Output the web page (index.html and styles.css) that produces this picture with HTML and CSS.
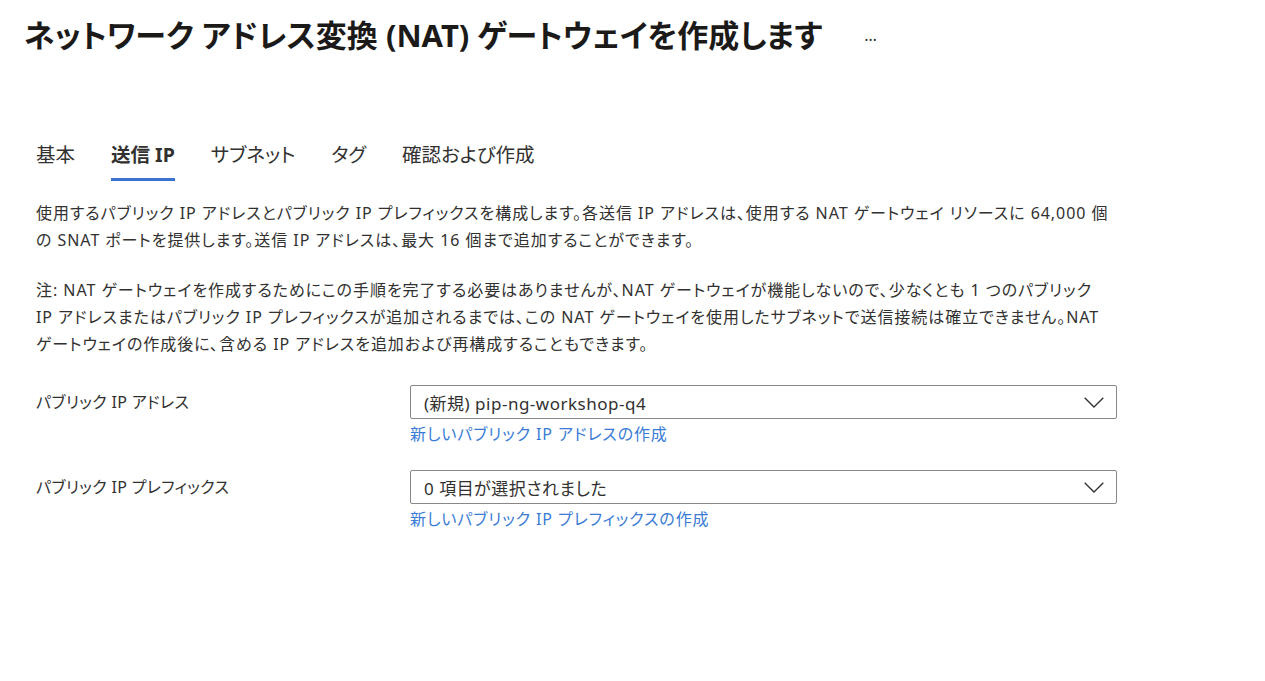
FILE: index.html
```html
<!DOCTYPE html>
<html lang="ja">
<head>
<meta charset="utf-8">
<title>NAT ゲートウェイ</title>
<link rel="stylesheet" href="styles.css">
</head>
<body>
<header class="header">
  <h1 class="title">ネットワーク アドレス変換 (NAT) ゲートウェイを作成します</h1>
  <span class="more">…</span>
</header>
<main class="main">
  <nav class="tabs">
    <span class="tab">基本</span>
    <span class="tab active">送信 IP</span>
    <span class="tab">サブネット</span>
    <span class="tab">タグ</span>
    <span class="tab">確認および作成</span>
  </nav>
  <p class="desc">
    <span class="line">使用するパブリック IP アドレスとパブリック IP プレフィックスを構成します。各送信 IP アドレスは、使用する NAT ゲートウェイ リソースに 64,000 個</span>
    <span class="line">の SNAT ポートを提供します。送信 IP アドレスは、最大 16 個まで追加することができます。</span>
  </p>
  <p class="desc note">
    <span class="line">注: NAT ゲートウェイを作成するためにこの手順を完了する必要はありませんが、NAT ゲートウェイが機能しないので、少なくとも 1 つのパブリック</span>
    <span class="line">IP アドレスまたはパブリック IP プレフィックスが追加されるまでは、この NAT ゲートウェイを使用したサブネットで送信接続は確立できません。NAT</span>
    <span class="line">ゲートウェイの作成後に、含める IP アドレスを追加および再構成することもできます。</span>
  </p>
  <div class="form">
    <div class="row">
      <div class="label">パブリック IP アドレス</div>
      <div class="field">
        <div class="select">
          <span class="value">(新規) pip-ng-workshop-q4</span>
          <svg class="chev" width="20" height="11" viewBox="0 0 20 11"><path d="M0.7 0.7 L10 10 L19.3 0.7" fill="none" stroke="#323130" stroke-width="1.3"/></svg>
        </div>
        <a class="link">新しいパブリック IP アドレスの作成</a>
      </div>
    </div>
    <div class="row">
      <div class="label">パブリック IP プレフィックス</div>
      <div class="field">
        <div class="select">
          <span class="value">0 項目が選択されました</span>
          <svg class="chev" width="20" height="11" viewBox="0 0 20 11"><path d="M0.7 0.7 L10 10 L19.3 0.7" fill="none" stroke="#323130" stroke-width="1.3"/></svg>
        </div>
        <a class="link">新しいパブリック IP プレフィックスの作成</a>
      </div>
    </div>
  </div>
</main>
</body>
</html>
```
FILE: styles.css
```css
* { box-sizing: border-box; }
html, body { margin: 0; background: #fff; }
body {
  font-family: "Noto Sans", "Noto Sans CJK JP", sans-serif;
  font-feature-settings: "palt";
  color: #323130;
  font-size: 16px;
}
.header {
  display: flex;
  align-items: center;
  padding: 15px 24px 0;
}
.title {
  margin: 0;
  font-size: 31px;
  line-height: 40px;
  font-weight: 700;
  color: #1b1a19;
}
.more {
  margin-left: 42px;
  font-size: 16px;
  line-height: 40px;
  color: #323130;
}
.main {
  padding: 0 36px;
}
.tabs {
  display: flex;
  gap: 36px;
  margin-top: 88px;
}
.tab {
  font-size: 19.5px;
  line-height: 24px;
  padding-bottom: 11px;
  border-bottom: 3px solid transparent;
  color: #323130;
}
.tab.active {
  font-weight: 700;
  border-bottom-color: #3b73d3;
}
.desc {
  margin: 19px 0 0;
  line-height: 27px;
  font-size: 16px;
  letter-spacing: 0.95px;
}
.desc.note { margin-top: 23px; }
.line { display: block; white-space: nowrap; }
.form { margin-top: 27px; }
.row {
  display: grid;
  grid-template-columns: 374px 707px;
  margin-bottom: 24px;
}
.label {
  line-height: 34px;
  letter-spacing: 0.35px;
}
.field { display: flex; flex-direction: column; }
.select {
  height: 34px;
  border: 1px solid #8a8886;
  border-radius: 2px;
  display: flex;
  align-items: center;
  justify-content: space-between;
  padding: 0 12px 0 13px;
}
.value {
  font-size: 17px;
  letter-spacing: 0.5px;
}
.chev { display: block; }
.link {
  margin-top: 3px;
  line-height: 24px;
  color: #3a7bd5;
  letter-spacing: 0.9px;
  cursor: pointer;
}
```
